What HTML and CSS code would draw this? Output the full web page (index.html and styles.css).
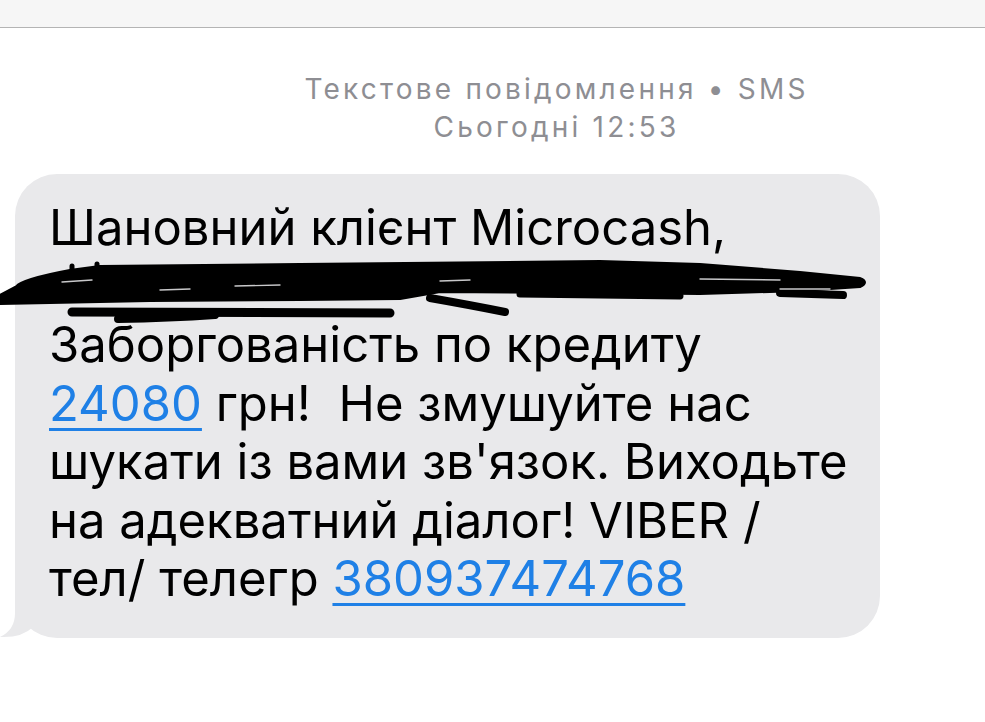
FILE: index.html
```html
<!DOCTYPE html>
<html lang="uk">
<head>
<meta charset="utf-8">
<link rel="stylesheet" href="styles.css">
</head>
<body>
<div class="topbar"></div>
<div class="meta">
  <div class="meta-line">Текстове повідомлення • SMS</div>
  <div class="meta-line">Сьогодні 12:53</div>
</div>
<div class="thread">
  <div class="bubble">
    <div class="text">
      <div class="line">Шановний клієнт Microcash,</div>
      <div class="line">&nbsp;</div>
      <div class="line">Заборгованість по кредиту</div>
      <div class="line"><span class="link">24080</span> грн!&nbsp; Не змушуйте нас</div>
      <div class="line">шукати із вами зв'язок. Виходьте</div>
      <div class="line">на адекватний діалог! VIBER /</div>
      <div class="line">тел/ телегр <span class="link">380937474768</span></div>
    </div>
    <svg class="tail" width="40" height="44" viewBox="0 0 40 44">
      <path d="M15 0 L15 19 Q15 36 0 43 Q22 44 33 33 L33 0 Z" fill="#e9e9eb"/>
    </svg>
    <svg class="scribble" width="880" height="80" viewBox="0 0 880 80">
      <path d="M0 46 L17 37 Q22 30 70 21 L100 17 L300 15 L600 12 L700 15 L800 23 L860 29 Q868 32 860 36 L800 40 L700 43 L600 42 L440 41 L400 48 L300 49 L150 50 L0 53 Z"
            fill="#000" stroke="#000" stroke-width="4" stroke-linejoin="round"/>
      <g stroke="#000" stroke-linecap="round" fill="none">
        <path d="M72 62 L390 63" stroke-width="9"/>
        <path d="M118 69 Q170 68 215 65" stroke-width="8"/>
        <path d="M430 48 Q470 55 505 62" stroke-width="8"/>
        <path d="M520 44 L680 46" stroke-width="7"/>
        <path d="M780 43 L843 45" stroke-width="8"/>
        <path d="M72 20 L72 16" stroke-width="5"/>
        <path d="M97 18 L97 14" stroke-width="5"/>
      </g>
      <g stroke="#c8c8ca" stroke-linecap="round" fill="none" stroke-width="1.4">
        <path d="M62 32 L92 30"/>
        <path d="M160 40 L190 39"/>
        <path d="M235 36 L280 35"/>
        <path d="M440 31 L470 30"/>
        <path d="M700 29 L780 30"/>
        <path d="M780 39 L830 39"/>
      </g>
    </svg>
  </div>
</div>
</body>
</html>
```
FILE: styles.css
```css
html, body {
  margin: 0;
  padding: 0;
  background: #ffffff;
}
body {
  width: 985px;
  height: 722px;
  overflow: hidden;
  font-family: Inter, "Noto Sans", sans-serif;
}
.topbar {
  height: 28px;
  background: #f6f6f6;
  border-bottom: 1px solid #b4b4b4;
  box-sizing: border-box;
}
.meta {
  margin-top: 42px;
  padding-left: 128px;
  text-align: center;
  color: #8e8e93;
  font-size: 28px;
  line-height: 38px;
  letter-spacing: 3.2px;
}
.thread {
  padding: 0 105px 0 15px;
  margin-top: 28px;
}
.bubble {
  position: relative;
  background: #e9e9eb;
  border-radius: 42px;
  width: 865px;
  box-sizing: border-box;
  padding: 25px 20px 29px 34px;
}
.text {
  font-size: 49px;
  line-height: 58.5px;
  color: #000;
}
.line {
  white-space: nowrap;
}
.link {
  color: #1f80e6;
  text-decoration: underline;
  text-decoration-thickness: 3px;
  text-underline-offset: 7px;
}
.tail {
  position: absolute;
  left: -15px;
  bottom: 0;
}
.scribble {
  position: absolute;
  left: -15px;
  top: 76px;
}
```
